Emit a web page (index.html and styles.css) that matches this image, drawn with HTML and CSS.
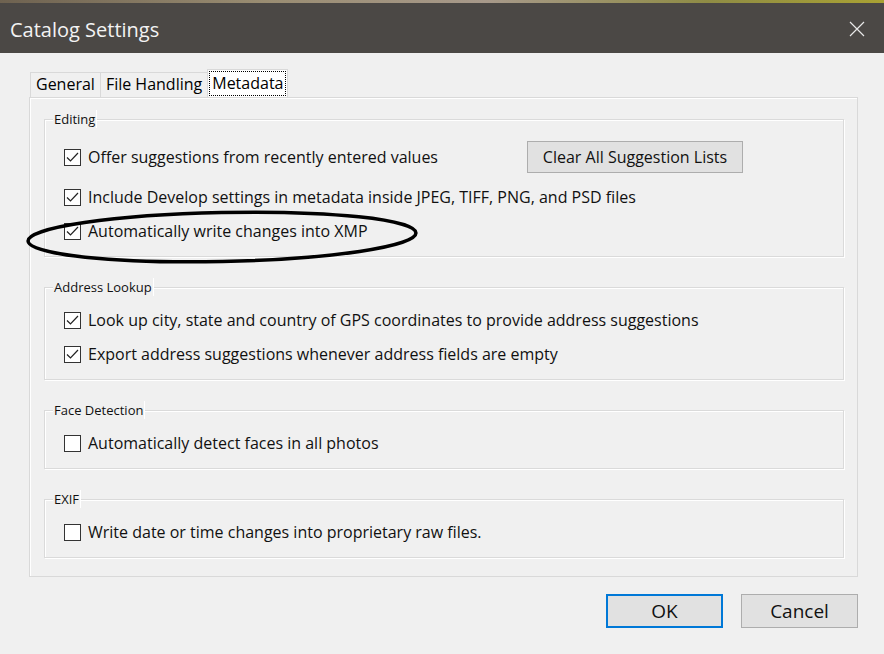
FILE: index.html
```html
<!DOCTYPE html>
<html lang="en">
<head>
  <meta charset="UTF-8">
  <title>Catalog Settings</title>
  <link rel="stylesheet" href="styles.css">
</head>
<body>
  <div class="strip"></div>
  <header class="titlebar">
    <span class="title">Catalog Settings</span>
    <svg class="close" width="16" height="16" viewBox="0 0 16 16">
      <path d="M1 1 L15 15 M15 1 L1 15" stroke="#e8e8e8" stroke-width="1.2" fill="none"/>
    </svg>
  </header>

  <main class="dialog">
    <nav class="tabs">
      <span class="tab">General</span>
      <span class="tab">File Handling</span>
      <span class="tab active"><span class="focus">Metadata</span></span>
    </nav>

    <section class="panel">
      <div class="group">
        <div class="group-title">Editing</div>
        <div class="rows editing">
          <div class="row first">
            <label class="check"><span class="box"><svg viewBox="0 0 15 15"><polyline points="2,7.5 5.5,11 13,3"/></svg></span>Offer suggestions from recently entered values</label>
            <button class="btn">Clear All Suggestion Lists</button>
          </div>
          <div class="row">
            <label class="check"><span class="box"><svg viewBox="0 0 15 15"><polyline points="2,7.5 5.5,11 13,3"/></svg></span>Include Develop settings in metadata inside JPEG, TIFF, PNG, and PSD files</label>
          </div>
          <div class="row">
            <label class="check"><span class="box"><svg viewBox="0 0 15 15"><polyline points="2,7.5 5.5,11 13,3"/></svg></span>Automatically write changes into XMP</label>
          </div>
        </div>
      </div>

      <div class="group">
        <div class="group-title">Address Lookup</div>
        <div class="rows">
          <div class="row">
            <label class="check"><span class="box"><svg viewBox="0 0 15 15"><polyline points="2,7.5 5.5,11 13,3"/></svg></span>Look up city, state and country of GPS coordinates to provide address suggestions</label>
          </div>
          <div class="row">
            <label class="check"><span class="box"><svg viewBox="0 0 15 15"><polyline points="2,7.5 5.5,11 13,3"/></svg></span>Export address suggestions whenever address fields are empty</label>
          </div>
        </div>
      </div>

      <div class="group">
        <div class="group-title">Face Detection</div>
        <div class="rows">
          <div class="row">
            <label class="check"><span class="box"></span>Automatically detect faces in all photos</label>
          </div>
        </div>
      </div>

      <div class="group">
        <div class="group-title">EXIF</div>
        <div class="rows">
          <div class="row">
            <label class="check"><span class="box"></span>Write date or time changes into proprietary raw files.</label>
          </div>
        </div>
      </div>
    </section>

    <footer class="actions">
      <button class="btn dlg default">OK</button>
      <button class="btn dlg">Cancel</button>
    </footer>
  </main>

  <!-- hand-drawn annotation over the dialog -->
  <svg class="annotation" width="884" height="654" viewBox="0 0 884 654">
    <ellipse cx="222" cy="237" rx="194" ry="24.5" transform="rotate(-1.2 222 237)" fill="none" stroke="#000" stroke-width="3.5"/>
  </svg>
</body>
</html>
```

FILE: styles.css
```css
body {
  margin: 0;
  width: 884px;
  height: 654px;
  overflow: hidden;
  background: #f0f0f0;
  font-family: 'Open Sans', 'Noto Sans', sans-serif;
  color: #000;
  position: relative;
}
.strip {
  height: 3px;
  background: linear-gradient(90deg, #6e6250 0%, #9a8d72 30%, #a7998a 55%, #8f8c45 80%, #a9a233 100%);
}
.titlebar {
  height: 50px;
  background: #4b4845;
  display: flex;
  align-items: center;
  justify-content: space-between;
  padding: 0 19px 0 10px;
  color: #f3f3f3;
}
.title {
  font-size: 20px;
  margin-top: 2px;
}
.close {
  display: block;
  margin-top: 1px;
}
.dialog {
  padding: 16px 26px 0 29px;
}
.tabs {
  display: flex;
  align-items: flex-end;
  height: 28px;
  padding-left: 1px;
}
.tab {
  box-sizing: border-box;
  height: 25px;
  padding: 0 5px;
  border: 1px solid #d9d9d9;
  border-bottom: none;
  margin-right: -1px;
  font-size: 16px;
  line-height: 23px;
  white-space: nowrap;
}
.tab.active {
  height: 28px;
  padding: 1px;
  background: #fff;
  position: relative;
}
.focus {
  display: block;
  box-sizing: border-box;
  height: 25px;
  padding: 0 2px;
  border: 1px dotted #000;
  line-height: 22px;
}
.panel {
  box-sizing: border-box;
  width: 829px;
  height: 480px;
  border: 1px solid #d9d9d9;
  box-shadow: inset 1px 1px 0 #fff;
  padding: 21px 13px 0 14px;
}
.group {
  border: 1px solid #dadada;
  box-shadow: inset 1px 1px 0 #fff, 1px 1px 0 #fff;
  margin-bottom: 30px;
}
.group-title {
  width: fit-content;
  height: 18px;
  margin: -10px 0 0 8px;
  padding: 0 1px;
  background: #f0f0f0;
  border-right: 1px solid #fff;
  font-size: 13px;
  line-height: 18px;
  color: #111;
}
.rows {
  padding: 7px 0 8px;
}
.rows.editing {
  padding-top: 13px;
}
.row {
  display: flex;
  align-items: center;
  height: 34px;
  padding-left: 19px;
}
.row.first {
  height: 32px;
  margin-bottom: 7px;
}
.row.first .check {
  width: 463px;
  flex: none;
}
.check {
  display: flex;
  align-items: center;
  font-size: 16px;
  color: #111;
  white-space: nowrap;
}
.box {
  box-sizing: border-box;
  width: 17px;
  height: 17px;
  flex: none;
  margin-right: 7px;
  border: 1px solid #333;
  background: #fff;
}
.box svg {
  display: block;
  width: 15px;
  height: 15px;
}
.box polyline {
  fill: none;
  stroke: #222;
  stroke-width: 1.2;
}
.btn {
  box-sizing: border-box;
  width: 216px;
  height: 32px;
  border: 1px solid #adadad;
  background: #e1e1e1;
  font-family: inherit;
  font-size: 16px;
  color: #111;
  padding: 0;
}
.actions {
  display: flex;
  justify-content: flex-end;
  gap: 18px;
  margin-top: 17px;
}
.btn.dlg {
  width: 117px;
  height: 34px;
  font-size: 19px;
}
.btn.default {
  border: 2px solid #0078d7;
}
.annotation {
  position: absolute;
  left: 0;
  top: 0;
  pointer-events: none;
}
```
